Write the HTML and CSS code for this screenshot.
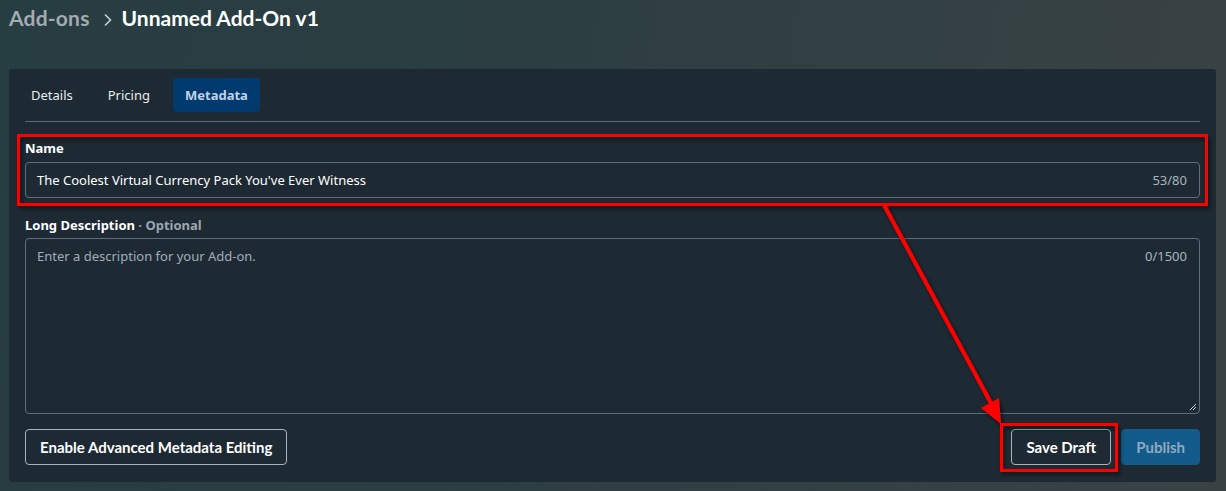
FILE: index.html
```html
<!DOCTYPE html>
<html>
<head>
<meta charset="utf-8">
<link rel="stylesheet" href="styles.css">
</head>
<body>
<div class="page">
  <header class="crumbs">
    <span class="crumb-parent">Add-ons</span>
    <svg class="chev" width="10" height="14" viewBox="0 0 10 14"><path d="M2 1.5 L7.5 7 L2 12.5" fill="none" stroke="#c9cfd3" stroke-width="1.6"/></svg>
    <span class="crumb-current">Unnamed Add-On v1</span>
  </header>
  <main class="panel">
    <nav class="tabs">
      <span class="tab">Details</span>
      <span class="tab">Pricing</span>
      <span class="tab active">Metadata</span>
    </nav>
    <div class="divider"></div>
    <section class="field name-field">
      <label class="label">Name</label>
      <div class="input">
        <span class="value">The Coolest Virtual Currency Pack You've Ever Witness</span>
        <span class="count">53/80</span>
      </div>
    </section>
    <section class="field desc-field">
      <label class="label">Long Description <span class="optional">· Optional</span></label>
      <div class="textarea">
        <span class="placeholder">Enter a description for your Add-on.</span>
        <span class="count">0/1500</span>
        <svg class="grip" width="8" height="8" viewBox="0 0 8 8"><path d="M7 1 L1 7 M7 4 L4 7" stroke="#c9cfd3" stroke-width="1"/></svg>
      </div>
    </section>
    <footer class="actions">
      <button class="btn outline">Enable Advanced Metadata Editing</button>
      <div class="right">
        <button class="btn outline">Save Draft</button>
        <button class="btn primary">Publish</button>
      </div>
    </footer>
  </main>
  <svg class="annot" width="1226" height="491" viewBox="0 0 1226 491">
    <defs>
      <filter id="sh" x="-5%" y="-20%" width="110%" height="140%">
        <feDropShadow dx="2" dy="3" stdDeviation="2" flood-color="#000" flood-opacity="0.6"/>
      </filter>
    </defs>
    <g filter="url(#sh)">
      <rect x="18.5" y="135.5" width="1188" height="69" fill="none" stroke="#ff0000" stroke-width="3"/>
      <rect x="1001.5" y="424.5" width="115" height="46" fill="none" stroke="#ff0000" stroke-width="3"/>
      <line x1="884" y1="205" x2="992" y2="405" stroke="#ff0000" stroke-width="4"/>
      <polygon points="1001,424 981,408 999,398" fill="#ff0000"/>
    </g>
  </svg>
</div>
</body>
</html>
```
FILE: styles.css
```css
* { box-sizing: border-box; }
html, body { margin: 0; padding: 0; }
body {
  width: 1226px;
  height: 491px;
  overflow: hidden;
  background: linear-gradient(100deg, #263d42 0%, #2c3e42 40%, #3a4244 100%);
  font-family: "Noto Sans", "Open Sans", sans-serif;
  color: #ffffff;
}
.page { position: relative; width: 1226px; height: 491px; }
.crumbs {
  height: 69px;
  display: flex;
  align-items: flex-start;
  padding: 5px 0 0 9px;
  font-family: "Lato", "Noto Sans", sans-serif;
  font-weight: 700;
  font-size: 21px;
}
.crumb-parent { color: #a4abb0; letter-spacing: 0.2px; }
.chev { margin: 8px 9px 0 13px; }
.crumb-current { color: #ffffff; letter-spacing: 0; }
.panel {
  margin: 0 10px 0 9px;
  height: 413px;
  background: #1e2a33;
  border-radius: 3px;
  padding: 9px 16px 17px 16px;
  display: flex;
  flex-direction: column;
}
.tabs { display: flex; gap: 11px; margin-left: -6px; height: 34px; }
.tab {
  display: flex;
  align-items: center;
  padding: 0 12px;
  font-size: 13px;
  color: #e8ecef;
  border-radius: 4px;
}
.tab.active {
  background: #003a6f;
  color: #bfd3e8;
  font-weight: 700;
}
.divider { height: 1px; background: #5d6b78; margin-top: 9px; }
.field { display: flex; flex-direction: column; }
.label {
  font-size: 13px;
  font-weight: 700;
  color: #ffffff;
  height: 20px;
  line-height: 20px;
}
.name-field { margin-top: 16px; }
.name-field .label { margin-bottom: 4px; }
.desc-field { margin-top: 17px; }
.desc-field .label { margin-bottom: 3px; }
.optional { color: #9aa7b3; }
.input {
  height: 36px;
  border: 1px solid #5e6d7b;
  border-radius: 4px;
  display: flex;
  align-items: center;
  justify-content: space-between;
  padding: 0 12px 0 11px;
  font-size: 13px;
}
.value { color: #ffffff; }
.count { color: #a9b4be; font-size: 13px; }
.textarea {
  position: relative;
  height: 176px;
  border: 1px solid #5e6d7b;
  border-radius: 4px;
  display: flex;
  align-items: flex-start;
  justify-content: space-between;
  padding: 8px 12px 0 11px;
  font-size: 13px;
}
.placeholder { color: #a2adb7; }
.grip { position: absolute; right: 2px; bottom: 2px; }
.actions {
  margin-top: auto;
  display: flex;
  justify-content: space-between;
  align-items: center;
}
.right { display: flex; gap: 10px; }
.btn {
  height: 36px;
  border-radius: 4px;
  font-family: "Lato", "Noto Sans", sans-serif;
  font-weight: 700;
  font-size: 15px;
  padding: 0 14px;
  cursor: pointer;
}
.btn.outline {
  background: transparent;
  border: 1px solid #aab3bb;
  color: #ffffff;
}
.btn.primary {
  background: #135b8b;
  border: 1px solid #135b8b;
  color: #90a9bf;
}
.annot { position: absolute; left: 0; top: 0; pointer-events: none; }
```
